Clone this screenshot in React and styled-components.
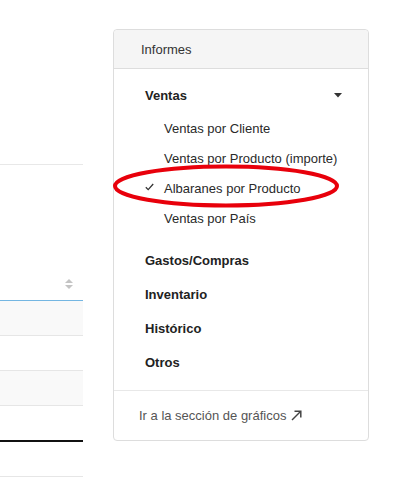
import React from 'react';
import styled, { createGlobalStyle } from 'styled-components';

const GlobalStyle = createGlobalStyle`
  html, body {
    margin: 0;
    padding: 0;
    background: #fff;
    font-family: "Liberation Sans", Arial, sans-serif;
    color: #333;
  }
`;

const Page = styled.div`
  display: flex;
  align-items: flex-start;
  width: 393px;
  height: 485px;
  overflow: hidden;
`;

const TableColumn = styled.div`
  flex: 0 0 83px;
  margin-top: 164px;
  border-top: 1px solid #e8e8e8;
`;

const TableHead = styled.div`
  height: 136px;
  display: flex;
  align-items: flex-end;
  justify-content: flex-end;
  padding: 0 10px 10px 0;
  box-sizing: border-box;
  border-bottom: 1px solid #74b6e2;
`;

const Row = styled.div`
  height: 34px;
  background: ${(p) => (p.$striped ? '#f9f9f9' : '#fff')};
  border-bottom: ${(p) => (p.$strong ? '2px solid #111' : '1px solid #e6e6e6')};
`;

const Panel = styled.div`
  position: relative;
  flex: 0 0 auto;
  margin: 29px 0 0 30px;
  width: 254px;
  border: 1px solid #ddd;
  border-radius: 4px;
`;

const PanelHeader = styled.div`
  height: 38px;
  display: flex;
  align-items: center;
  padding-left: 27px;
  background: #f5f5f5;
  border-bottom: 1px solid #ddd;
  border-radius: 4px 4px 0 0;
  font-size: 13px;
  color: #333;
`;

const PanelBody = styled.div`
  padding: 11px 0 11px;
  border-bottom: 1px solid #e8e8e8;
`;

const GroupTitle = styled.div`
  display: flex;
  align-items: center;
  justify-content: space-between;
  height: ${(p) => p.$h || 34}px;
  padding: 0 26px 0 31px;
  font-size: 13px;
  font-weight: bold;
  color: #222;
`;

const SubList = styled.div`
  padding: 3px 0 10px;
`;

const SubItem = styled.div`
  position: relative;
  height: 30px;
  display: flex;
  align-items: center;
  padding-left: 50px;
  font-size: 13px;
  color: #2a2a2a;
  white-space: nowrap;
`;

const Check = styled.span`
  position: absolute;
  left: 31px;
  top: 10px;
  display: flex;
`;

const Footer = styled.div`
  height: 49px;
  display: flex;
  align-items: center;
  gap: 5px;
  padding-left: 25px;
  font-size: 13px;
  color: #555;
`;

const Highlight = styled.svg`
  position: absolute;
  left: -2px;
  top: 133px;
  pointer-events: none;
`;

const SortIcon = () => (
  <svg width="8" height="11" viewBox="0 0 8 11">
    <path d="M4 0 L8 4 L0 4 Z" fill="#c4c4c4" />
    <path d="M0 6 L8 6 L4 10 Z" fill="#c4c4c4" />
  </svg>
);

const Caret = () => (
  <svg width="8" height="5" viewBox="0 0 8 5">
    <path d="M0 0 L8 0 L4 4.5 Z" fill="#333" />
  </svg>
);

const CheckMark = () => (
  <svg width="9" height="8" viewBox="0 0 9 8">
    <path d="M0.8 4.2 L3.2 6.6 L8.2 1" fill="none" stroke="#333" strokeWidth="1.3" />
  </svg>
);

const ArrowOut = () => (
  <svg width="11" height="11" viewBox="0 0 11 11">
    <path d="M1 10 L9.5 1.5" stroke="#444" strokeWidth="1.5" fill="none" />
    <path d="M3.5 1.2 L9.8 1.2 L9.8 7.5" stroke="#444" strokeWidth="1.5" fill="none" />
  </svg>
);

const ventas = [
  'Ventas por Cliente',
  'Ventas por Producto (importe)',
  'Albaranes por Producto',
  'Ventas por País',
];

const groups = ['Gastos/Compras', 'Inventario', 'Histórico', 'Otros'];

export default function App() {
  return (
    <>
      <GlobalStyle />
      <Page>
        <TableColumn>
          <TableHead>
            <SortIcon />
          </TableHead>
          <Row $striped />
          <Row />
          <Row $striped />
          <Row $strong />
          <Row />
        </TableColumn>

        <Panel>
          <PanelHeader>Informes</PanelHeader>
          <PanelBody>
            <GroupTitle $h={30}>
              Ventas
              <Caret />
            </GroupTitle>
            <SubList>
              {ventas.map((v) => (
                <SubItem key={v}>
                  {v === 'Albaranes por Producto' && (
                    <Check>
                      <CheckMark />
                    </Check>
                  )}
                  {v}
                </SubItem>
              ))}
            </SubList>
            {groups.map((g) => (
              <GroupTitle key={g}>{g}</GroupTitle>
            ))}
          </PanelBody>
          <Footer>
            Ir a la sección de gráficos
            <ArrowOut />
          </Footer>

          <Highlight width="232" height="46" viewBox="0 0 232 46">
            <ellipse cx="114" cy="23" rx="111" ry="19.5" fill="none" stroke="#e8000b" strokeWidth="4" />
          </Highlight>
        </Panel>
      </Page>
    </>
  );
}
